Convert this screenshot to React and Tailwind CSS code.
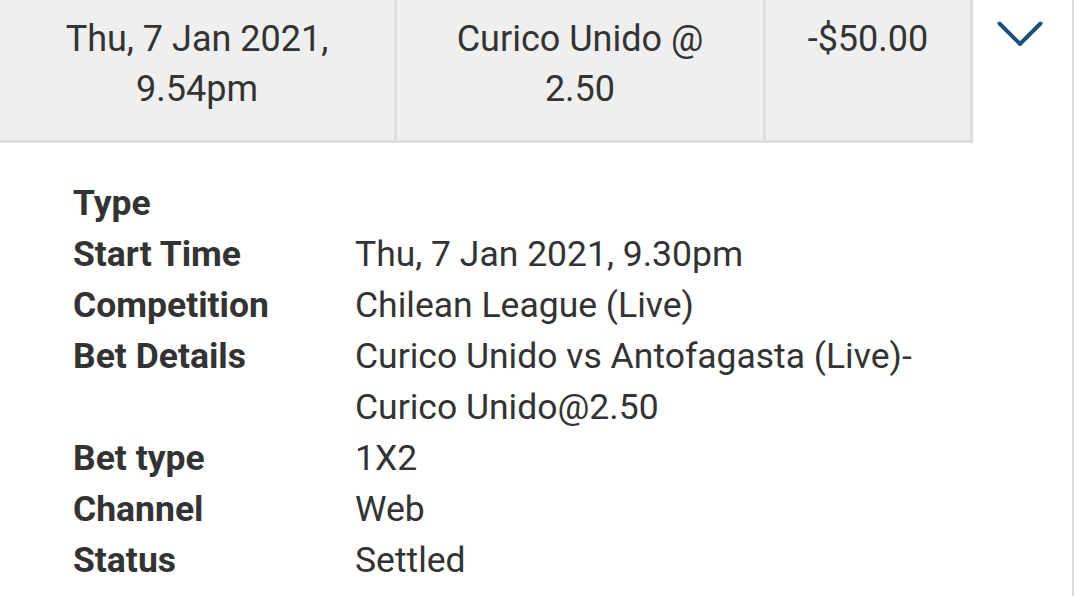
import React from 'react';

const details = [
  { label: 'Type', value: '' },
  { label: 'Start Time', value: 'Thu, 7 Jan 2021, 9.30pm' },
  { label: 'Competition', value: 'Chilean League (Live)' },
  { label: 'Bet Details', value: 'Curico Unido vs Antofagasta (Live)-\nCurico Unido@2.50' },
  { label: 'Bet type', value: '1X2' },
  { label: 'Channel', value: 'Web' },
  { label: 'Status', value: 'Settled' },
  { label: 'Result', value: 'Lose' },
];

const App = () => {
  return (
    <div className="w-[1074px] h-[596px] overflow-hidden bg-white text-[#333333] border-r-2 border-[#dcdcdc]" style={{ fontFamily: 'Roboto, "Liberation Sans", sans-serif' }}>
      <div className="flex h-[143px]">
        <div className="w-[397px] bg-[#efefef] border-r-[3px] border-b-[3px] border-[#dedede] flex justify-center pt-[14px]">
          <p className="text-center text-[36px] leading-[50px]">Thu, 7 Jan 2021,<br />9.54pm</p>
        </div>
        <div className="w-[369px] bg-[#efefef] border-r-[3px] border-b-[3px] border-[#dedede] flex justify-center pt-[14px]">
          <p className="text-center text-[36px] leading-[50px]">Curico Unido @<br />2.50</p>
        </div>
        <div className="w-[207px] bg-[#efefef] border-r-[3px] border-b-[3px] border-[#dedede] flex justify-center pt-[14px]">
          <p className="text-center text-[36px] leading-[50px]">-$50.00</p>
        </div>
        <div className="flex-1 flex justify-center pt-[21px] pr-[6px]">
          <svg width="46" height="27" viewBox="0 0 46 27" fill="none">
            <path d="M2.5 2.5 L23 23 L43.5 2.5" stroke="#1b5276" strokeWidth="4" strokeLinecap="round" strokeLinejoin="round" />
          </svg>
        </div>
      </div>
      <div className="pl-[73px] pt-[35px]">
        {details.map((d) => (
          <div key={d.label} className="flex text-[35.5px] leading-[51px]">
            <div className="w-[282px] shrink-0 font-bold">{d.label}</div>
            <div className="whitespace-pre-line">{d.value}</div>
          </div>
        ))}
      </div>
    </div>
  );
};

export default App;
